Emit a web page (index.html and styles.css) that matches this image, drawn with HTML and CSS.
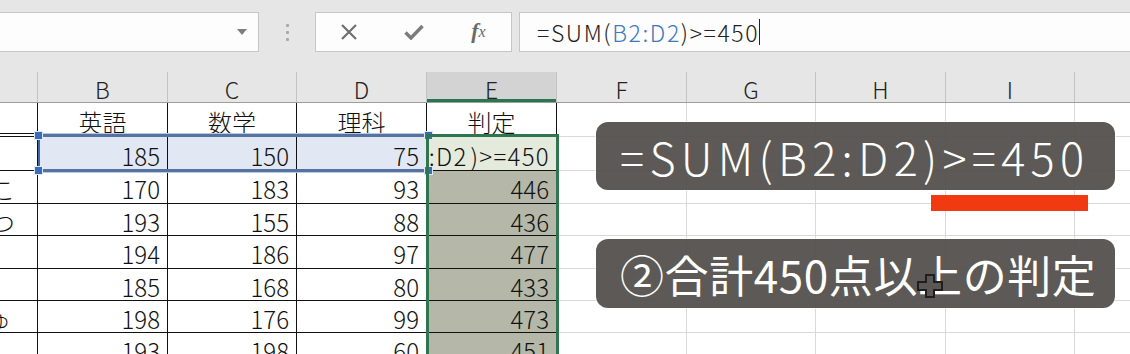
FILE: index.html
```html
<!DOCTYPE html>
<html lang="ja">
<head>
    <meta charset="UTF-8">
    <title>判定</title>
    <link rel="stylesheet" href="styles.css">
</head>
<body>
<div class="toolbar">
    <div class="namebox"><span class="dropdown"></span></div>
    <div class="grip"><i></i><i></i><i></i></div>
    <div class="fxbuttons">
        <span class="fxbtn">
            <svg width="18" height="16" viewBox="0 0 18 16"><path d="M2 1 L16 15 M16 1 L2 15" stroke="#6f6f6f" stroke-width="2.2" fill="none"/></svg>
        </span>
        <span class="fxbtn">
            <svg width="20" height="16" viewBox="0 0 20 16"><path d="M1.5 8.5 L7 14 L18.5 2" stroke="#7c7c7c" stroke-width="3.4" fill="none"/></svg>
        </span>
        <span class="fxbtn fx">f<small>x</small></span>
    </div>
    <div class="formula">=SUM(<span class="ref">B2:D2</span>)&gt;=450<span class="caret"></span></div>
</div>

<div class="colheads">
    <div class="ch"></div>
    <div class="ch">B</div>
    <div class="ch">C</div>
    <div class="ch">D</div>
    <div class="ch active">E</div>
    <div class="ch">F</div>
    <div class="ch">G</div>
    <div class="ch">H</div>
    <div class="ch">I</div>
    <div class="ch last"></div>
</div>

<div class="sheet">
    <!-- 1 -->
    <div class="c t first"></div>
    <div class="c t mid">英語</div>
    <div class="c t mid">数学</div>
    <div class="c t mid">理科</div>
    <div class="c t mid">判定</div>
    <div class="c g"></div><div class="c g"></div><div class="c g"></div><div class="c g"></div><div class="c g last"></div>
    <!-- 2 -->
    <div class="c t"></div>
    <div class="c t num hl">185</div>
    <div class="c t num hl">150</div>
    <div class="c t num hl">75</div>
    <div class="c t num active-cell"><span>=SUM(B2:D2&#8202;)&gt;=450</span></div>
    <div class="c g"></div><div class="c g"></div><div class="c g"></div><div class="c g"></div><div class="c g last"></div>
    <!-- 3 -->
    <div class="c t"><span class="frag">こ</span></div>
    <div class="c t num">170</div>
    <div class="c t num">183</div>
    <div class="c t num">93</div>
    <div class="c t num sel">446</div>
    <div class="c g"></div><div class="c g"></div><div class="c g"></div><div class="c g"></div><div class="c g last"></div>
    <!-- 4 -->
    <div class="c t"><span class="frag">つ</span></div>
    <div class="c t num">193</div>
    <div class="c t num">155</div>
    <div class="c t num">88</div>
    <div class="c t num sel">436</div>
    <div class="c g"></div><div class="c g"></div><div class="c g"></div><div class="c g"></div><div class="c g last"></div>
    <!-- 5 -->
    <div class="c t"></div>
    <div class="c t num">194</div>
    <div class="c t num">186</div>
    <div class="c t num">97</div>
    <div class="c t num sel">477</div>
    <div class="c g"></div><div class="c g"></div><div class="c g"></div><div class="c g"></div><div class="c g last"></div>
    <!-- 6 -->
    <div class="c t"></div>
    <div class="c t num">185</div>
    <div class="c t num">168</div>
    <div class="c t num">80</div>
    <div class="c t num sel">433</div>
    <div class="c g"></div><div class="c g"></div><div class="c g"></div><div class="c g"></div><div class="c g last"></div>
    <!-- 7 -->
    <div class="c t"><span class="frag narrow">ゅ</span></div>
    <div class="c t num">198</div>
    <div class="c t num">176</div>
    <div class="c t num">99</div>
    <div class="c t num sel">473</div>
    <div class="c g"></div><div class="c g"></div><div class="c g"></div><div class="c g"></div><div class="c g last"></div>
    <!-- 8 -->
    <div class="c t"></div>
    <div class="c t num">193</div>
    <div class="c t num">198</div>
    <div class="c t num">60</div>
    <div class="c t num sel">451</div>
    <div class="c g"></div><div class="c g"></div><div class="c g"></div><div class="c g"></div><div class="c g last"></div>
</div>

<!-- 参照範囲 B2:D2 -->
<div class="ref-range">
    <span class="handle tl"></span><span class="handle bl"></span>
    <span class="handle tr"></span><span class="handle br"></span>
</div>
<!-- 選択範囲 E2:E8 -->
<div class="sel-range"></div>

<div class="callout callout-formula">=SUM(B2:D2)&gt;=450</div>
<div class="underline"></div>
<div class="callout callout-note">②合計450点以上の判定</div>

<svg class="cursor" width="30" height="26" viewBox="0 0 30 26">
    <path d="M11 2 H19 V9 H27 V17 H19 V24 H11 V17 H3 V9 H11 Z" fill="#5b5755" stroke="#1f1f1f" stroke-width="2"/>
</svg>
</body>
</html>
```

FILE: styles.css
```css
body {
    margin: 0;
    width: 1130px;
    height: 354px;
    overflow: hidden;
    position: relative;
    background-color: #ffffff;
    font-family: "Noto Sans CJK JP", "Noto Sans", sans-serif;
    color: #111111;
}

/* 数式バー */
.toolbar {
    height: 72px;
    box-sizing: border-box;
    padding-top: 12px;
    background-color: #e6e6e6;
    display: flex;
    align-items: flex-start;
}
.namebox {
    width: 260px;
    height: 40px;
    margin-left: -1px;
    box-sizing: border-box;
    background-color: #fdfdfd;
    border: 1px solid #c6c6c6;
    display: flex;
    align-items: center;
    justify-content: flex-end;
    padding-right: 11px;
}
.dropdown {
    width: 0;
    height: 0;
    border-left: 5px solid transparent;
    border-right: 5px solid transparent;
    border-top: 6px solid #7d7d7d;
}
.grip {
    width: 56px;
    height: 40px;
    display: flex;
    flex-direction: column;
    align-items: center;
    justify-content: center;
    gap: 4px;
}
.grip i {
    width: 3px;
    height: 3px;
    background-color: #a9a9a9;
    border-radius: 1px;
}
.fxbuttons {
    width: 197px;
    height: 40px;
    box-sizing: border-box;
    background-color: #fdfdfd;
    border: 1px solid #c6c6c6;
    display: flex;
}
.fxbtn {
    width: 65px;
    height: 38px;
    display: flex;
    align-items: center;
    justify-content: center;
}
.fx {
    font-family: "Liberation Serif", serif;
    font-style: italic;
    font-weight: bold;
    font-size: 22px;
    color: #6a6a6a;
    padding-bottom: 2px;
    box-sizing: border-box;
}
.fx small {
    font-size: 16px;
    font-weight: normal;
    position: relative;
    top: 1px;
}
.formula {
    flex: 1;
    margin-left: 7px;
    margin-right: -2px;
    height: 40px;
    box-sizing: border-box;
    background-color: #fdfdfd;
    border: 1px solid #c6c6c6;
    padding-left: 17px;
    display: flex;
    align-items: center;
    font-size: 23px;
    font-weight: 300;
    letter-spacing: 1.6px;
    white-space: nowrap;
    color: #222222;
}
.formula .ref {
    color: #3f78bf;
}
.caret {
    width: 1px;
    height: 26px;
    background-color: #222222;
}

/* 列見出し */
.colheads,
.sheet {
    display: grid;
    grid-template-columns: 38px 130px 129px 130px 130px 130px 129px 130px 129px 1fr;
}
.colheads {
    height: 31px;
    background-color: #e6e6e6;
    border-bottom: 1px solid #9e9e9e;
    box-sizing: border-box;
}
.ch {
    border-right: 1px solid #c3c3c3;
    display: flex;
    align-items: center;
    justify-content: center;
    padding-top: 4px;
    box-sizing: border-box;
    font-size: 23px;
    font-weight: 300;
    color: #222222;
    line-height: 1;
}
.ch.active {
    background-color: #d3d3d3;
    box-shadow: inset 0 -3px 0 #2b7451;
}
.ch.last {
    border-right: none;
}

/* セル */
.sheet {
    grid-template-rows: 34px 34px 33px 32px 33px 32px 32px 33px;
}
.c {
    box-sizing: border-box;
    font-size: 24px;
    font-weight: 300;
    line-height: 1;
    display: flex;
    align-items: center;
    padding-top: 4px;
    overflow: hidden;
    white-space: nowrap;
}
.t {
    border-right: 1px solid #111111;
    border-bottom: 1px solid #111111;
}
.t.first {
    border-bottom: 4px double #111111;
}
.g {
    border-right: 1px solid #d9d9d9;
    border-bottom: 1px solid #d9d9d9;
}
.g.last {
    border-right: none;
}
.mid {
    justify-content: center;
}
.num {
    justify-content: flex-end;
    padding-right: 7px;
}
.hl {
    background-color: #e1e8f4;
}
.frag {
    margin-left: -9px;
}
.frag.narrow {
    margin-left: -13px;
}
.active-cell {
    background-color: #e4eadc;
    padding-right: 6px;
    letter-spacing: 1.3px;
}
.sel {
    background-color: #b5b8a8;
}

/* 範囲の枠 */
.ref-range {
    position: absolute;
    left: 38px;
    top: 134px;
    width: 389px;
    height: 38px;
    box-sizing: border-box;
    border-top: 3px solid #56739f;
    border-bottom: 3px solid #56739f;
    border-left: 2px solid #3d66ad;
    box-shadow: 0 1px 0 #b6c9e6, 0 -1px 0 #b6c9e6;
}
.handle {
    position: absolute;
    width: 7px;
    height: 7px;
    background-color: #3b6cb7;
    border: 1px solid #dfe8f6;
}
.tl { left: -6px; top: -6px; }
.bl { left: -6px; bottom: -6px; }
.tr { right: -6px; top: -6px; }
.br { right: -6px; bottom: -6px; }

.sel-range {
    position: absolute;
    left: 426px;
    top: 134px;
    width: 133px;
    height: 240px;
    box-sizing: border-box;
    border: 3px solid #2f7650;
}

/* 吹き出し */
.callout {
    position: absolute;
    left: 596px;
    width: 519px;
    box-sizing: border-box;
    background-color: rgba(80, 76, 73, 0.93);
    border-radius: 12px;
    box-shadow: 0 0 0 1px rgba(255, 255, 255, 0.75);
    color: #ffffff;
    display: flex;
    align-items: center;
    padding-left: 24px;
    white-space: nowrap;
}
.callout-formula {
    top: 122px;
    height: 68px;
    font-size: 45px;
    font-weight: 300;
    letter-spacing: 5.3px;
}
.callout-note {
    top: 239px;
    height: 69px;
    font-size: 44px;
    letter-spacing: 0.6px;
}
.underline {
    position: absolute;
    left: 931px;
    top: 195px;
    width: 157px;
    height: 16px;
    background-color: #f23a12;
}
.cursor {
    position: absolute;
    left: 915px;
    top: 273px;
}
```
